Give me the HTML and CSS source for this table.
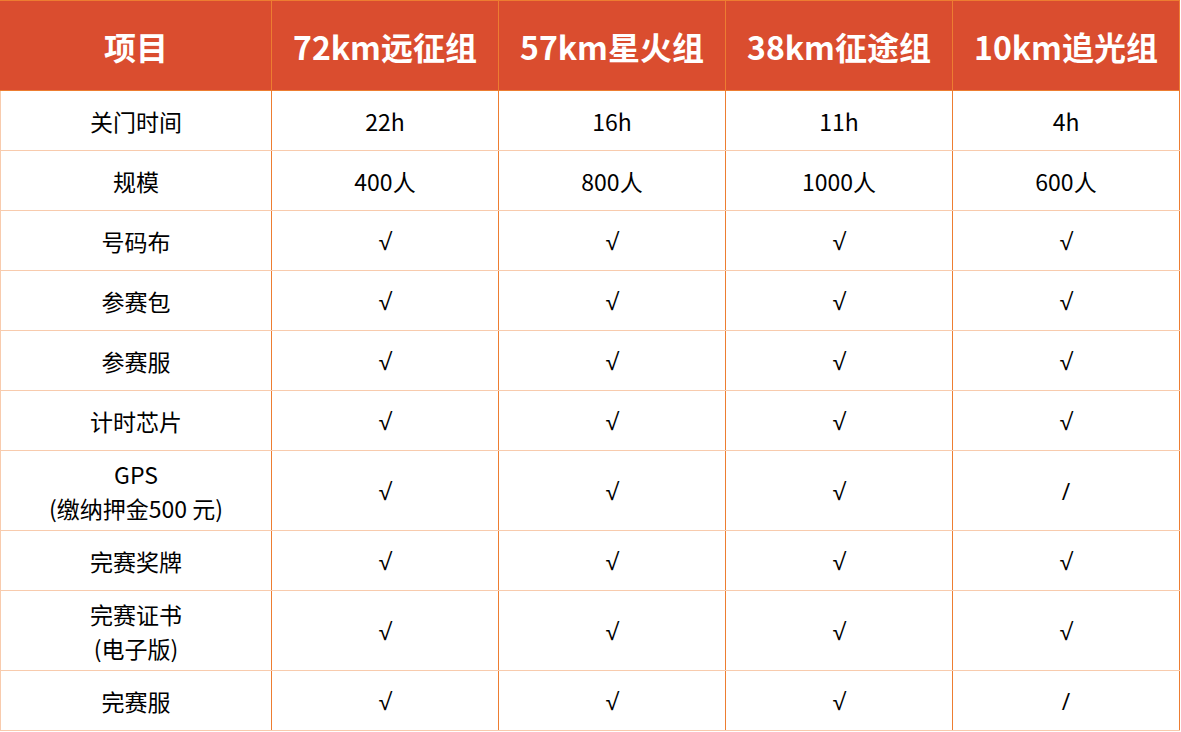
FILE: index.html
```html
<!DOCTYPE html>
<html lang="zh-CN">
<head>
<meta charset="utf-8">
<title>组别对比</title>
<link rel="stylesheet" href="styles.css">
</head>
<body>
<table class="groups">
  <colgroup>
    <col class="col-item">
    <col class="col-group"><col class="col-group"><col class="col-group"><col class="col-group">
  </colgroup>
  <thead>
    <tr>
      <th>项目</th>
      <th>72km远征组</th>
      <th>57km星火组</th>
      <th>38km征途组</th>
      <th>10km追光组</th>
    </tr>
  </thead>
  <tbody>
    <tr><td>关门时间</td><td>22h</td><td>16h</td><td>11h</td><td>4h</td></tr>
    <tr><td>规模</td><td>400人</td><td>800人</td><td>1000人</td><td>600人</td></tr>
    <tr><td>号码布</td><td class="mark">√</td><td class="mark">√</td><td class="mark">√</td><td class="mark">√</td></tr>
    <tr><td>参赛包</td><td class="mark">√</td><td class="mark">√</td><td class="mark">√</td><td class="mark">√</td></tr>
    <tr><td>参赛服</td><td class="mark">√</td><td class="mark">√</td><td class="mark">√</td><td class="mark">√</td></tr>
    <tr><td>计时芯片</td><td class="mark">√</td><td class="mark">√</td><td class="mark">√</td><td class="mark">√</td></tr>
    <tr class="tall"><td>GPS<br>(缴纳押金500 元)</td><td class="mark">√</td><td class="mark">√</td><td class="mark">√</td><td class="mark">/</td></tr>
    <tr><td>完赛奖牌</td><td class="mark">√</td><td class="mark">√</td><td class="mark">√</td><td class="mark">√</td></tr>
    <tr class="tall"><td>完赛证书<br>(电子版)</td><td class="mark">√</td><td class="mark">√</td><td class="mark">√</td><td class="mark">√</td></tr>
    <tr><td>完赛服</td><td class="mark">√</td><td class="mark">√</td><td class="mark">√</td><td class="mark">/</td></tr>
  </tbody>
</table>
</body>
</html>
```
FILE: styles.css
```css
html, body {
  margin: 0;
  padding: 0;
  background: #ffffff;
}
body {
  font-family: "Noto Sans CJK SC", "Noto Sans", sans-serif;
  color: #000000;
}
.groups {
  border-collapse: collapse;
  table-layout: fixed;
  width: 1180px;
}
.col-item { width: 271px; }
.col-group { width: 227px; }
.groups th {
  height: 89px;
  padding: 0;
  background: #da4d2f;
  color: #ffffff;
  font-size: 32px;
  font-weight: 700;
  text-align: center;
  vertical-align: middle;
  border: 1px solid #ed7d31;
  line-height: 1;
}
.groups th:first-child {
  border-left-color: #da4d2f;
}
.groups td {
  height: 59px;
  padding: 0;
  font-size: 23px;
  line-height: 34px;
  text-align: center;
  vertical-align: middle;
  border-top: 1px solid #f8cbad;
  border-bottom: 1px solid #f8cbad;
  border-left: 1px solid #ed7d31;
  border-right: 1px solid #ed7d31;
}
.groups td:first-child {
  border-left-color: #f8cbad;
}
.groups tr.tall td {
  height: 79px;
}
.groups td.mark {
  font-family: "Open Sans", "Noto Sans", sans-serif;
}
```
